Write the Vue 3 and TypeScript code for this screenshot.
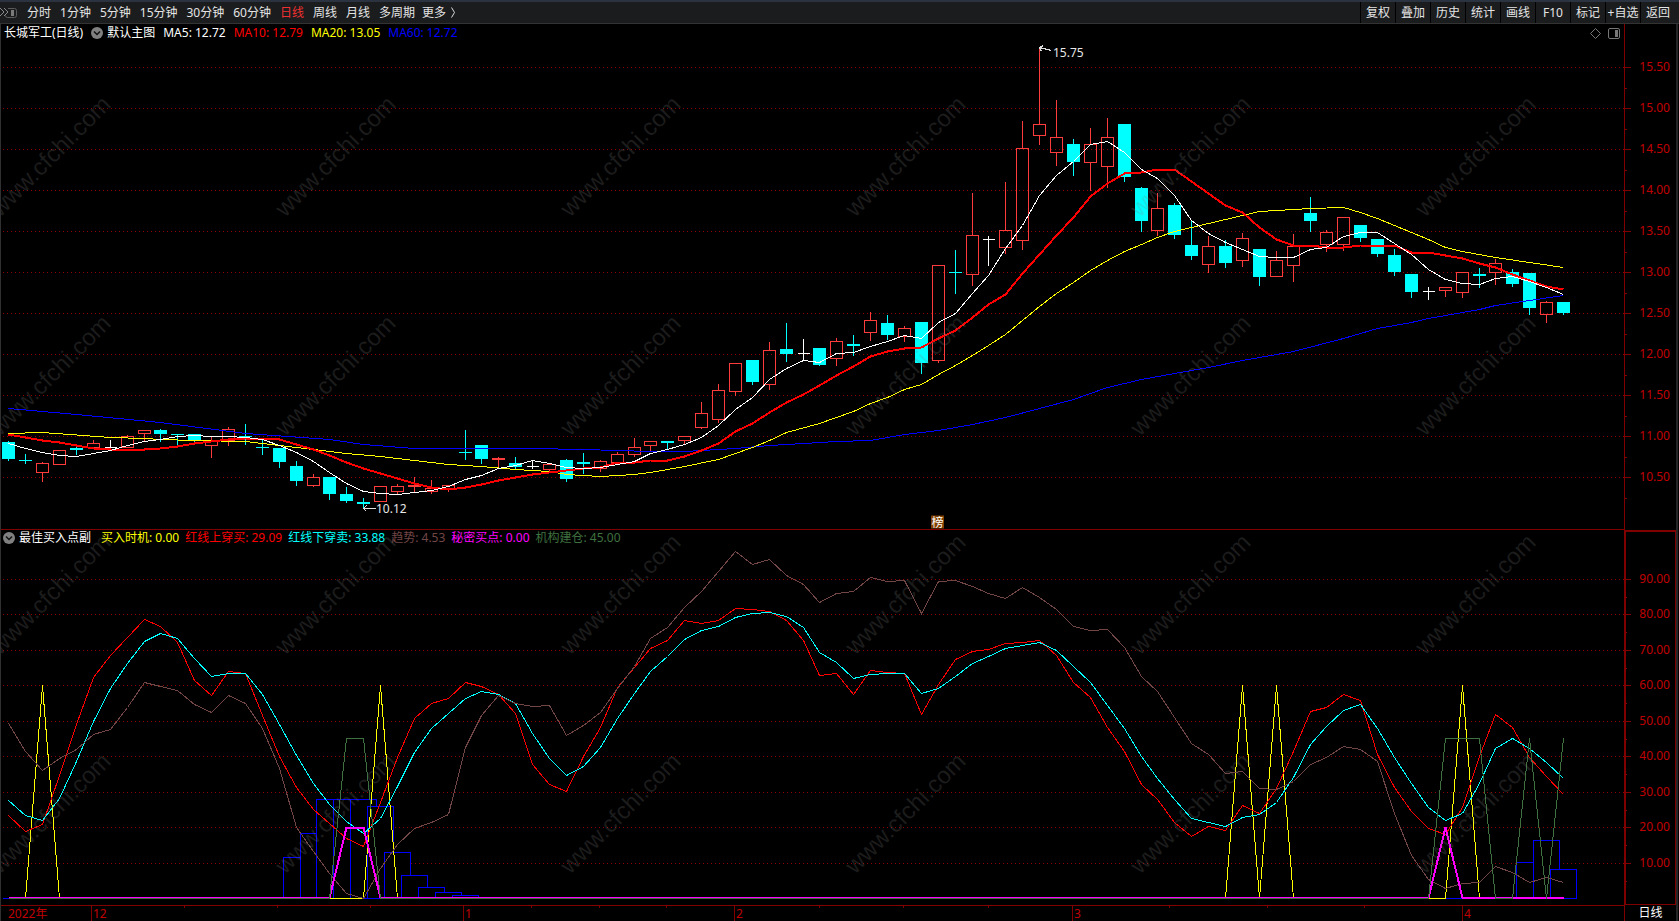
<script setup lang="ts">
type Point = [number, number]
type Kind = 'up' | 'down' | 'flat'
type Candle = [Kind, number, number, number, number]
interface Series { name: string; points: Point[] }
interface Reading { tone: string; text: string }

const periods: string[] = ['分时', '1分钟', '5分钟', '15分钟', '30分钟', '60分钟', '日线', '周线', '月线', '多周期']
const activePeriod = '日线'
const actions: string[] = ['复权', '叠加', '历史', '统计', '画线', 'F10', '标记', '+自选', '返回']

const mainReadings: Reading[] = [
  { tone: 'white', text: 'MA5: 12.72' },
  { tone: 'red', text: 'MA10: 12.79' },
  { tone: 'yellow', text: 'MA20: 13.05' },
  { tone: 'blue', text: 'MA60: 12.72' },
]
const subReadings: Reading[] = [
  { tone: 'yellow', text: '买入时机: 0.00' },
  { tone: 'red', text: '红线上穿买: 29.09' },
  { tone: 'cyan', text: '红线下穿卖: 33.88' },
  { tone: 'brown', text: '趋势: 4.53' },
  { tone: 'magenta', text: '秘密买点: 0.00' },
  { tone: 'green', text: '机构建仓: 45.00' },
]

// Chart space shared by both panels
const LEFT = 1
const WIDTH = 1623
const MAIN = { top: 24, height: 506 }
const SUB = { top: 530, height: 375 }
const ZERO = 898
// Two-pixel line resting on the zero level
const BASE = 897.5

const x = (i: number): number => Math.round(8.3 + i * 16.9)
const priceY = (v: number): number => Math.round(67 + (15.5 - v) * 82)
const levelY = (v: number): number => Math.round(ZERO + 0.4 - v * 3.55)
const pctX = (v: number): string => `${((v - LEFT) / WIDTH) * 100}%`
const pctY = (v: number, p: { top: number; height: number }): string => `${((v - p.top) / p.height) * 100}%`

const prices: number[] = Array.from({ length: 11 }, (_, i) => 15.5 - i * 0.5)
const levels: number[] = Array.from({ length: 9 }, (_, i) => 90 - i * 10)

// kind, high, body top, body bottom, low
const candles: Candle[] = [
  ['down', 440, 442, 459, 460], ['down', 453, 460, 461, 463], ['up', 461, 463, 472, 481], ['up', 450, 450, 464, 464],
  ['down', 446, 448, 450, 454], ['up', 439, 443, 447, 448], ['flat', 439, 447, 447, 448], ['up', 434, 436, 447, 447],
  ['up', 430, 430, 433, 440], ['down', 428, 430, 434, 441], ['down', 433, 434, 435, 444], ['down', 434, 434, 441, 441],
  ['up', 435, 441, 445, 457], ['up', 426, 429, 440, 445], ['down', 423, 436, 437, 444], ['down', 439, 447, 448, 454],
  ['down', 448, 448, 462, 467], ['down', 460, 466, 481, 485], ['up', 473, 477, 485, 486], ['down', 476, 477, 494, 499],
  ['down', 486, 494, 501, 502], ['down', 497, 502, 504, 508], ['up', 486, 486, 501, 501], ['up', 483, 486, 491, 494],
  ['up', 476, 485, 486, 491], ['up', 479, 488, 491, 493], ['up', 484, 485, 489, 491], ['down', 429, 452, 453, 459],
  ['down', 445, 445, 459, 463], ['up', 456, 458, 459, 466], ['down', 456, 463, 467, 468], ['flat', 459, 466, 466, 468],
  ['up', 464, 464, 469, 470], ['down', 458, 460, 479, 481], ['down', 452, 462, 464, 473], ['up', 459, 461, 468, 471],
  ['up', 451, 454, 462, 462], ['up', 437, 447, 454, 456], ['up', 440, 441, 445, 450], ['down', 440, 441, 443, 448],
  ['up', 436, 436, 440, 444], ['up', 401, 413, 427, 428], ['up', 383, 390, 419, 422], ['up', 363, 363, 391, 395],
  ['down', 360, 360, 382, 384], ['up', 341, 350, 384, 389], ['down', 322, 349, 354, 361], ['flat', 338, 353, 353, 359],
  ['down', 347, 348, 365, 365], ['up', 337, 341, 358, 365], ['down', 334, 344, 346, 355], ['up', 311, 320, 332, 340],
  ['down', 314, 323, 335, 339], ['up', 325, 328, 336, 341], ['down', 322, 322, 363, 373], ['up', 265, 265, 360, 362],
  ['down', 249, 272, 273, 293], ['up', 192, 235, 274, 285], ['flat', 235, 239, 239, 265], ['up', 181, 230, 247, 253],
  ['up', 120, 148, 240, 249], ['up', 47, 124, 135, 144], ['up', 99, 137, 152, 165], ['down', 138, 144, 162, 175],
  ['up', 127, 144, 162, 190], ['up', 117, 137, 166, 187], ['down', 124, 124, 177, 181], ['down', 186, 188, 221, 231],
  ['up', 192, 208, 230, 235], ['down', 202, 205, 235, 238], ['down', 219, 245, 256, 259], ['up', 235, 246, 264, 272],
  ['down', 239, 246, 263, 267], ['up', 232, 238, 260, 266], ['down', 249, 249, 277, 285], ['up', 250, 260, 276, 276],
  ['up', 233, 246, 265, 281], ['down', 196, 213, 221, 231], ['up', 229, 232, 244, 251], ['up', 217, 217, 244, 250],
  ['down', 225, 225, 238, 241], ['down', 238, 239, 254, 256], ['down', 248, 255, 272, 275], ['down', 273, 274, 292, 297],
  ['flat', 286, 291, 291, 299], ['up', 287, 287, 290, 296], ['up', 272, 272, 292, 297], ['down', 267, 274, 276, 287],
  ['up', 258, 263, 272, 284], ['down', 268, 272, 284, 286], ['down', 273, 273, 308, 314], ['up', 300, 302, 314, 322],
  ['down', 302, 302, 313, 314],
]

const dense = (values: number[]): Point[] => values.map((v, i) => [i, v])

const averages: Series[] = [
  { name: 'blue', points: [[0, 408], [4, 414], [9, 422], [14, 433], [19, 439], [21, 444], [24, 448], [31, 448], [34, 449], [38, 451], [40, 451], [43, 448], [45, 445], [47, 443], [49, 441], [51, 440], [53, 434], [55, 430], [57, 424], [59, 417], [61, 408], [63, 399], [65, 387], [67, 379], [69, 373], [71, 367], [73, 360], [76, 351], [79, 338], [81, 328], [83, 322], [84, 318], [86, 312], [87, 309], [88, 305], [90, 300], [92, 295]] },
  { name: 'yellow', points: [[0, 433], [2, 432], [6, 437], [8, 438], [9, 439], [11, 440], [14, 441], [16, 445], [18, 449], [20, 453], [22, 456], [24, 460], [26, 464], [28, 466], [30, 469], [32, 471], [33, 474], [35, 476], [37, 474], [38, 472], [40, 466], [42, 459], [43, 453], [44, 447], [45, 440], [46, 432], [48, 423], [49, 417], [50, 411], [51, 403], [52, 397], [53, 389], [54, 384], [55, 374], [56, 365], [57, 355], [58, 345], [59, 334], [60, 320], [61, 306], [62, 293], [63, 282], [64, 270], [65, 260], [66, 251], [67, 244], [68, 237], [69, 231], [71, 223], [73, 215], [74, 211], [77, 208], [79, 207], [80, 212], [81, 218], [82, 225], [83, 232], [84, 239], [85, 247], [86, 251], [88, 257], [90, 262], [92, 267]] },
  { name: 'red thick', points: dense([434, 437, 440, 442, 445, 448, 449, 449, 449, 448, 446, 443, 441, 439, 438, 438, 439, 444, 449, 455, 462, 468, 473, 478, 483, 487, 489, 487, 484, 480, 477, 474, 472, 470, 468, 467, 462, 462, 460, 460, 456, 450, 443, 431, 423, 412, 402, 394, 385, 375, 366, 356, 351, 348, 347, 338, 330, 317, 304, 294, 273, 254, 235, 217, 196, 183, 173, 172, 169, 169, 181, 193, 205, 212, 227, 239, 245, 245, 247, 247, 245, 245, 245, 252, 252, 255, 258, 263, 267, 274, 280, 286, 289]) },
  { name: 'white', points: dense([443, 448, 452, 455, 456, 453, 450, 445, 441, 439, 436, 435, 436, 436, 437, 439, 445, 452, 461, 472, 483, 491, 493, 494, 492, 490, 486, 479, 475, 468, 465, 460, 463, 467, 468, 467, 464, 461, 453, 449, 444, 437, 425, 409, 397, 379, 368, 360, 362, 353, 352, 346, 341, 335, 338, 322, 313, 293, 275, 248, 225, 195, 175, 161, 144, 141, 152, 169, 178, 195, 220, 233, 242, 249, 256, 257, 257, 249, 247, 236, 232, 232, 243, 254, 269, 279, 283, 284, 278, 276, 281, 287, 294]) },
]

const blocks: Point[] = [
  [17, 857], [18, 833], [19, 799], [20, 799], [21, 799], [22, 806], [23, 852], [24, 875],
  [25, 887], [26, 892], [27, 895], [90, 862], [91, 840], [92, 869],
]

const indicators: Series[] = [
  { name: 'yellow', points: [[0, ZERO], [1, ZERO], [2, 685], [3, ZERO], [21, ZERO], [22, 685], [23, ZERO], [72, ZERO], [73, 685], [74, ZERO], [75, 685], [76, ZERO], [85, ZERO], [86, 685], [87, ZERO], [92, ZERO]] },
  { name: 'red', points: dense([815, 831, 824, 775, 724, 677, 655, 637, 619, 626, 642, 680, 695, 671, 673, 715, 756, 787, 809, 823, 838, 846, 802, 757, 718, 703, 698, 682, 686, 694, 713, 764, 784, 791, 756, 727, 687, 667, 648, 640, 620, 623, 620, 608, 609, 611, 620, 640, 675, 673, 694, 670, 672, 673, 714, 684, 659, 651, 649, 643, 642, 640, 655, 682, 697, 727, 751, 784, 799, 822, 836, 826, 830, 805, 813, 788, 751, 711, 707, 694, 700, 754, 787, 811, 828, 834, 807, 756, 714, 727, 757, 776, 794]) },
  { name: 'cyan', points: dense([800, 815, 820, 798, 761, 721, 688, 663, 641, 633, 638, 658, 676, 673, 673, 694, 724, 755, 783, 804, 821, 833, 818, 786, 752, 728, 713, 698, 691, 694, 703, 733, 758, 775, 766, 747, 718, 693, 671, 656, 639, 630, 626, 617, 613, 612, 616, 627, 652, 662, 678, 674, 673, 673, 693, 688, 676, 663, 656, 648, 645, 642, 650, 666, 682, 705, 728, 756, 778, 799, 818, 822, 826, 817, 814, 802, 777, 744, 726, 710, 704, 728, 757, 783, 807, 820, 813, 783, 748, 738, 748, 762, 778]) },
  { name: 'brown', points: dense([723, 751, 770, 758, 749, 734, 729, 707, 682, 686, 690, 704, 712, 695, 703, 728, 768, 827, 851, 873, 893, 898, 868, 844, 828, 822, 814, 747, 715, 695, 703, 706, 705, 735, 725, 712, 688, 666, 638, 627, 607, 591, 571, 551, 564, 559, 575, 584, 602, 593, 591, 577, 581, 580, 613, 581, 580, 586, 593, 598, 587, 597, 609, 626, 630, 629, 647, 676, 691, 717, 743, 754, 773, 771, 788, 789, 781, 764, 757, 746, 749, 761, 813, 855, 879, 888, 883, 882, 866, 872, 882, 877, 882]) },
  { name: 'magenta thick', points: [[0, BASE], [19, BASE], [20, 827], [21, 827], [22, BASE], [84, BASE], [85, 827], [86, BASE], [92, BASE]] },
  { name: 'green', points: [[0, ZERO], [19, ZERO], [20, 738], [21, 738], [22, ZERO], [84, ZERO], [85, 738], [87, 738], [88, ZERO], [89, ZERO], [90, 738], [91, ZERO], [92, 738]] },
]

const path = (points: Point[]): string => points.map(([i, y]) => `${x(i)},${y}`).join(' ')

const months: { at: number; label: string }[] = [
  { at: 91, label: '12' }, { at: 463, label: '1' }, { at: 734, label: '2' }, { at: 1072, label: '3' }, { at: 1462, label: '4' },
]
const weeks: number[] = [184, 277, 370, 531, 599, 666, 819, 903, 988, 1169, 1267, 1364]

const marks: Point[] = []
for (let row = 0; row < 4; row++) for (let col = 0; col < 6; col++) marks.push([-1 + col * 285, 194 + row * 219])
</script>

<template>
  <main class="terminal">
    <header class="toolbar">
      <button class="dock" type="button" aria-label="展开侧栏">
        <svg width="17" height="12" viewBox="0 0 17 12" fill="none">
          <path d="M0 1l4 4-4 4M4 1l4 4-4 4" stroke="#8a8a8a" />
          <path d="M8 1.500h6.500q2 0 2 2v5q0 2-2 2h-7q-2 0-2-2" stroke="#5c5c5c" />
          <path d="M11 3h3v6h-3z" fill="#7a7a7a" />
        </svg>
      </button>
      <nav class="periods">
        <button v-for="p in periods" :key="p" type="button" :class="{ active: p === activePeriod }">{{ p }}</button>
        <button type="button" class="more">更多
          <svg width="5" height="11" viewBox="0 0 5 11" fill="none" stroke="#ddd"><path d="M.5 .5l3 5-3 5" /></svg>
        </button>
      </nav>
      <div class="actions">
        <button v-for="a in actions" :key="a" type="button">{{ a }}</button>
      </div>
    </header>

    <div class="body">
      <section class="panel main-panel">
        <svg class="plot" :viewBox="`${LEFT} ${MAIN.top} ${WIDTH} ${MAIN.height}`" preserveAspectRatio="none">
          <g transform="translate(.5 .5)">
            <line v-for="p in prices" :key="p" class="grid" x1="2" x2="1623" :y1="priceY(p)" :y2="priceY(p)" />
            <g v-for="(c, i) in candles" :key="i" :class="['candle', c[0]]">
              <template v-if="c[0] === 'flat'">
                <path :d="`M${x(i)} ${c[1]}V${c[4]}M${x(i) - 6} ${c[2]}h12`" />
              </template>
              <template v-else-if="c[0] === 'down'">
                <path :d="`M${x(i)} ${c[1]}V${c[4]}`" />
                <rect :x="x(i) - 6.5" :y="c[2] - 0.5" width="13" :height="c[3] - c[2]" />
              </template>
              <template v-else>
                <path :d="`M${x(i)} ${c[1]}V${c[2]}M${x(i)} ${c[3]}V${c[4]}`" />
                <rect :x="x(i) - 6" :y="c[2]" width="12" :height="c[3] - c[2]" />
              </template>
            </g>
            <polyline v-for="s in averages" :key="s.name" :class="['line', s.name]" :points="path(s.points)" />
            <path class="pointer" d="M1039 47l12 3M1043 45l-4 2 2 4M363 508h12M366 505l-3 3 3 3" />
          </g>
        </svg>
        <div class="legend">
          <span class="white title">长城军工(日线)</span>
          <button class="fold" type="button" aria-label="主图菜单">
            <svg width="12" height="12" viewBox="0 0 12 12"><circle cx="6" cy="6" r="6" fill="#808080" /><path d="M3 4.500l3 3 3-3" fill="none" stroke="#111" stroke-width="1.500" /></svg>
          </button>
          <span class="white name">默认主图</span>
          <span v-for="r in mainReadings" :key="r.text" :class="r.tone">{{ r.text }}</span>
          <span class="tools">
            <svg width="11" height="11" viewBox="0 0 11 11" fill="none" stroke="#777"><path d="M5.500 .5l5 5-5 5-5-5z" /></svg>
            <svg width="12" height="11" viewBox="0 0 12 11"><rect x=".5" y=".5" width="11" height="10" rx="1.500" fill="none" stroke="#777" /><path d="M7 2h3v7H7z" fill="#777" /></svg>
          </span>
        </div>
        <span class="note" :style="{ left: pctX(1053), top: pctY(53, MAIN) }">15.75</span>
        <span class="note" :style="{ left: pctX(376), top: pctY(509, MAIN) }">10.12</span>
        <span class="badge" :style="{ left: pctX(931), top: pctY(522, MAIN) }">榜</span>
      </section>

      <aside class="scale">
        <svg class="plot" :viewBox="`1624 ${MAIN.top} 52 ${MAIN.height}`" preserveAspectRatio="none">
          <g transform="translate(.5 .5)" class="tick">
            <path v-for="p in prices" :key="p" :d="`M1624 ${priceY(p)}h6M1624 ${priceY(p) + 21}h2`" />
          </g>
        </svg>
        <span v-for="p in prices" :key="p" class="value" :style="{ top: pctY(priceY(p), MAIN) }">{{ p.toFixed(2) }}</span>
      </aside>

      <section class="panel">
        <svg class="plot" :viewBox="`${LEFT} ${SUB.top} ${WIDTH} ${SUB.height}`" preserveAspectRatio="none">
          <g transform="translate(.5 .5)">
            <line v-for="l in levels" :key="l" class="grid" x1="2" x2="1623" :y1="levelY(l)" :y2="levelY(l)" />
            <line class="line blue" x1="2" x2="1563" :y1="ZERO" :y2="ZERO" />
            <rect v-for="b in blocks" :key="b[0]" class="block" :x="x(b[0]) - 13" :y="b[1]" width="26" :height="ZERO - b[1]" />
            <polyline v-for="s in indicators" :key="s.name" :class="['line', s.name]" :points="path(s.points)" />
          </g>
        </svg>
        <div class="legend sub">
          <button class="fold" type="button" aria-label="副图菜单">
            <svg width="12" height="12" viewBox="0 0 12 12"><circle cx="6" cy="6" r="6" fill="#808080" /><path d="M3 4.500l3 3 3-3" fill="none" stroke="#111" stroke-width="1.500" /></svg>
          </button>
          <span class="white title">最佳买入点副</span>
          <span v-for="r in subReadings" :key="r.text" :class="r.tone">{{ r.text }}</span>
        </div>
      </section>

      <aside class="scale boxed">
        <svg class="plot" :viewBox="`1624 ${SUB.top} 52 ${SUB.height}`" preserveAspectRatio="none">
          <g transform="translate(.5 .5)" class="tick">
            <path v-for="l in levels" :key="l" :d="`M1624 ${levelY(l)}h6M1624 ${levelY(l) + 18}h2`" />
          </g>
        </svg>
        <span v-for="l in levels" :key="l" class="value" :style="{ top: pctY(levelY(l), SUB) }">{{ l.toFixed(2) }}</span>
      </aside>

      <footer class="dates">
        <span class="year">2022年</span>
        <span v-for="m in months" :key="m.at" class="month" :style="{ left: pctX(m.at) }">{{ m.label }}</span>
        <i v-for="w in weeks" :key="w" class="week" :style="{ left: pctX(w) }"></i>
      </footer>
      <div class="mode">日线</div>
      <div class="edge"></div>

      <svg class="marks" aria-hidden="true">
        <text v-for="(m, i) in marks" :key="i" :transform="`translate(${m[0]} ${m[1]}) rotate(-45)`">www.cfchi.com</text>
      </svg>
    </div>
  </main>
</template>

<style>
body {
  background: #000;
}
</style>

<style scoped>
.terminal {
  display: flex;
  flex-direction: column;
  height: 100vh;
  min-height: 480px;
  overflow: hidden;
  background: #000;
  font: 12px/16px "Noto Sans", "Noto Sans CJK SC", sans-serif;
}
button {
  padding: 0;
  border: 0;
  background: none;
  color: #e4e4e4;
  font: inherit;
  white-space: nowrap;
}
svg {
  display: block;
}
.toolbar {
  display: flex;
  align-items: center;
  flex: none;
  height: 24px;
  box-sizing: border-box;
  border-top: 2px solid #2b3340;
  border-bottom: 1px solid #333;
  padding-right: 4px;
  background: #1b1c1e;
}
.dock {
  width: 27px;
}
.periods {
  display: flex;
  gap: 9px;
  flex: 1;
}
.periods .active {
  color: #f03030;
}
.more {
  display: flex;
  align-items: center;
  gap: 5px;
  margin-left: -2px;
}
.actions {
  display: grid;
  grid-template-columns: repeat(9, 35px);
  align-self: stretch;
}
.actions button {
  border-left: 1px solid #000;
}
.body {
  position: relative;
  display: grid;
  flex: 1;
  min-height: 0;
  grid-template-columns: minmax(0, 1fr) 52px 3px;
  grid-template-rows: minmax(0, 506fr) minmax(0, 375fr) 16px;
  border-left: 1px solid #303030;
}
.panel,
.scale {
  position: relative;
  grid-column: 1;
}
.scale {
  grid-column: 2;
  border-left: 1px solid #800000;
}
.boxed {
  box-shadow: inset 0 0 0 1px #800000, inset 0 1px 0 1px #800000;
}
.main-panel {
  box-shadow: inset 0 -1px #800000;
}
.plot {
  position: absolute;
  inset: 0;
  width: 100%;
  height: 100%;
  shape-rendering: crispEdges;
}
.plot * {
  vector-effect: non-scaling-stroke;
}
.grid {
  stroke: #900000;
  stroke-dasharray: 1 3;
}
.tick {
  stroke: #800000;
}
.candle.up {
  fill: none;
  stroke: #ff3c3c;
}
.candle.down path {
  stroke: #0ff;
}
.candle.down rect {
  fill: #0ff;
}
.candle.flat {
  fill: none;
  stroke: #fff;
}
.block {
  fill: #000;
  stroke: #00f;
}
.line {
  fill: none;
  stroke: currentColor;
}
.line.thick {
  stroke-width: 2px;
}
.pointer {
  fill: none;
  stroke: #ddd;
}
.white { color: #fff; }
.red { color: #f00; }
.yellow { color: #ff0; }
.blue { color: #00f; }
.cyan { color: #0ff; }
.brown { color: #734646; }
.magenta { color: #f0f; }
.green { color: #3f703f; }
.legend {
  position: relative;
  display: flex;
  align-items: center;
  gap: 8px;
  height: 16px;
  padding: 1px 4px 0 3px;
  white-space: nowrap;
}
.legend.sub {
  gap: 6px;
  padding: 0 4px 0 2px;
}
.legend .fold + .name {
  margin-left: -4px;
}
.sub .title {
  margin: 0 4px 0 -2px;
}
.tools {
  display: flex;
  gap: 7px;
  margin-left: auto;
}
.note {
  position: absolute;
  color: #e8e8e8;
  transform: translateY(-50%);
}
.badge {
  position: absolute;
  width: 13px;
  background: #804000;
  color: #fff;
  font-size: 12px;
  line-height: 13px;
  text-align: center;
  transform: translateY(-50%);
}
.value {
  position: absolute;
  right: 6px;
  color: #c00000;
  transform: translateY(-50%);
}
.dates {
  position: relative;
  grid-column: 1;
  border-top: 1px solid #800000;
  color: #c00000;
}
.year {
  padding-left: 7px;
}
.month {
  position: absolute;
  top: 0;
  height: 15px;
  padding-left: 1px;
  border-left: 1px solid #800000;
}
.week {
  position: absolute;
  top: 0;
  width: 1px;
  height: 2px;
  background: #800000;
}
.mode {
  grid-column: 2;
  border-left: 1px solid #800000;
  color: #fff;
  text-align: center;
}
.edge {
  grid-column: 3;
  grid-row: 1 / 4;
  border-left: 2px solid #262626;
}
.marks {
  position: absolute;
  inset: 0;
  width: calc(100% - 55px);
  height: 100%;
  pointer-events: none;
  fill: rgba(128, 128, 128, 0.22);
  font: 24px "Liberation Sans", Arial, sans-serif;
}
</style>
